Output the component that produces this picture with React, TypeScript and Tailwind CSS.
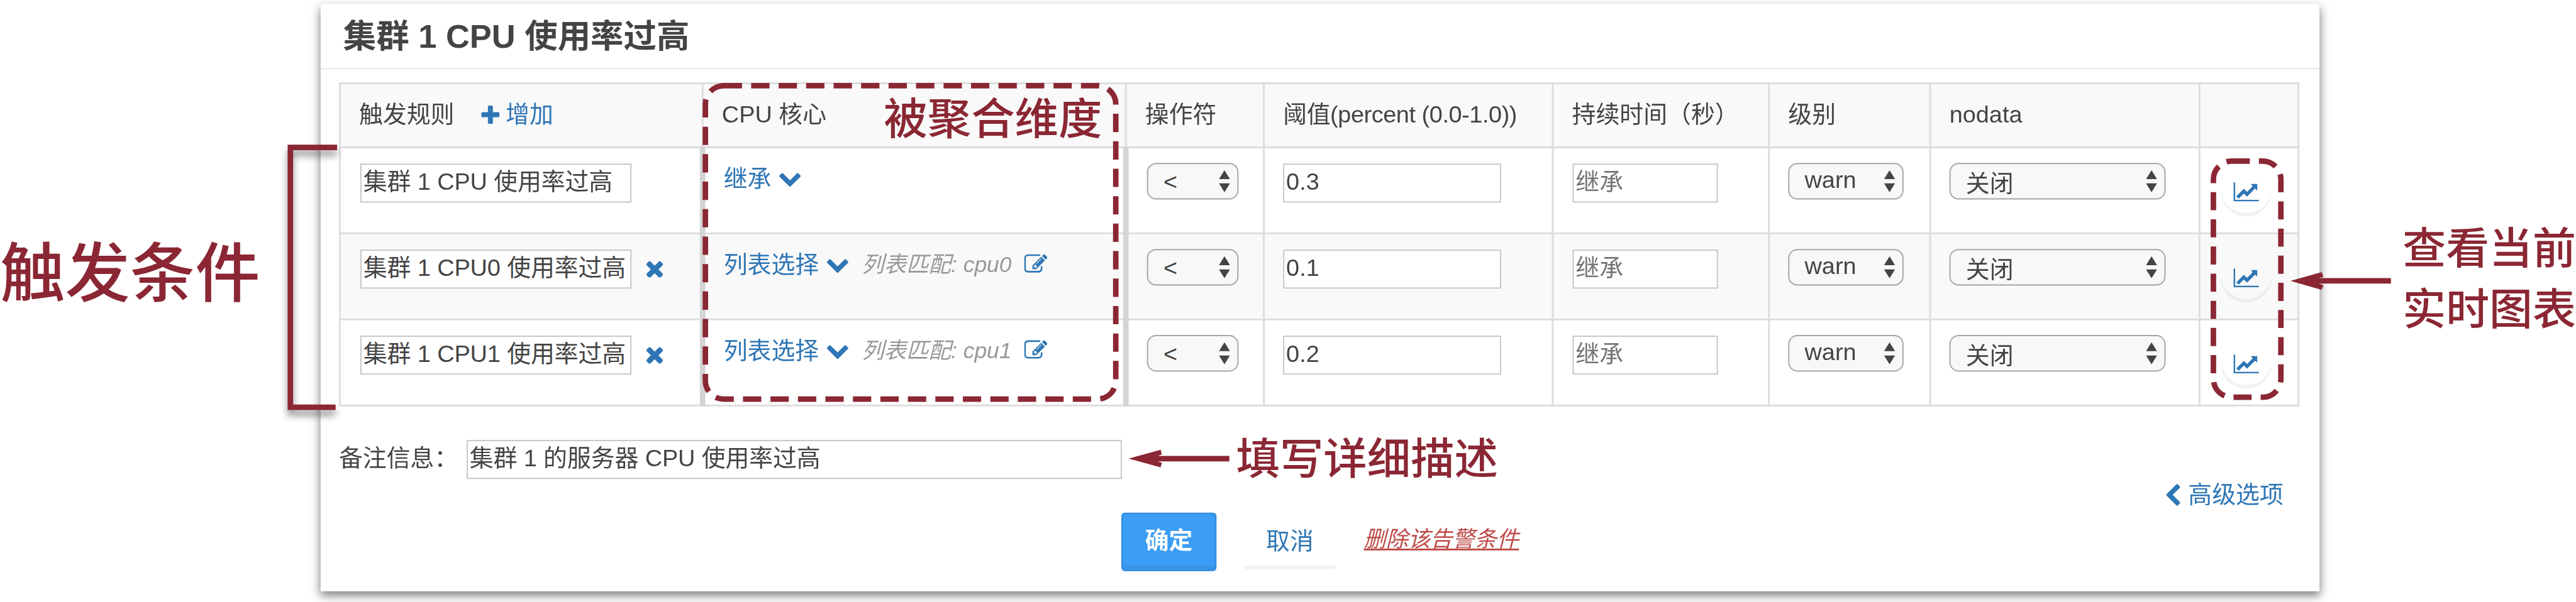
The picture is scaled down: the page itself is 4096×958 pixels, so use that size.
import React from "react";

type IconProps = { d: string; viewBox?: string; className: string };

const Icon = ({ d, viewBox = "0 0 1792 1792", className }: IconProps) => (
  <svg viewBox={viewBox} className={className} fill="currentColor" aria-hidden="true">
    <path d={d} />
  </svg>
);

const PLUS =
  "M1600 736v192q0 40-28 68t-68 28h-416v416q0 40-28 68t-68 28h-192q-40 0-68-28t-28-68v-416h-416q-40 0-68-28t-28-68v-192q0-40 28-68t68-28h416v-416q0-40 28-68t68-28h192q40 0 68 28t28 68v416h416q40 0 68 28t28 68z";
const TIMES =
  "M1490 1322q0 40-28 68l-136 136q-28 28-68 28t-68-28l-294-294-294 294q-28 28-68 28t-68-28l-136-136q-28-28-28-68t28-68l294-294-294-294q-28-28-28-68t28-68l136-136q28-28 68-28t68 28l294 294 294-294q28-28 68-28t68 28l136 136q28 28 28 68t-28 68l-294 294 294 294q28 28 28 68z";
const CHEVRON_DOWN =
  "M1683 808l-742 741q-19 19-45 19t-45-19l-742-741q-19-19-19-45.5t19-45.5l166-165q19-19 45-19t45 19l531 531 531-531q19-19 45-19t45 19l166 165q19 19 19 45.5t-19 45.5z";
const CHEVRON_LEFT =
  "M1427 301l-531 531 531 531q19 19 19 45t-19 45l-166 166q-19 19-45 19t-45-19l-742-742q-19-19-19-45t19-45l742-742q19-19 45-19t45 19l166 166q19 19 19 45t-19 45z";
const EDIT =
  "M888 1184l116-116-152-152-116 116v56h96v96h56zm440-720q-16-16-33 1l-350 350q-17 17-1 33t33-1l350-350q17-17 1-33zm80 594v190q0 119-84.5 203.5t-203.5 84.5h-832q-119 0-203.5-84.5t-84.5-203.5v-832q0-119 84.5-203.5t203.5-84.5h832q63 0 117 25 15 7 18 23 3 17-9 29l-49 49q-14 14-32 8-23-6-45-6h-832q-66 0-113 47t-47 113v832q0 66 47 113t113 47h832q66 0 113-47t47-113v-126q0-13 9-22l64-64q15-15 35-7t20 29zm-96-738l288 288-672 672h-288v-288zm444 132l-92 92-288-288 92-92q28-28 68-28t68 28l152 152q28 28 28 68t-28 68z";
const LINE_CHART =
  "M2048 1536v128h-2048v-1536h128v1408h1920zm-128-1248v435q0 21-19.5 29.5t-35.5-7.5l-121-121-633 633q-10 10-23 10t-23-10l-233-233-416 416-192-192 585-585q10-10 23-10t23 10l233 233 464-464-121-121q-16-16-7.5-35.5t29.5-19.5h435q14 0 22.5 8.5t8.5 22.5z";

type Rule = { name: string; pick: string; match?: string; threshold: string };

const RULES: Rule[] = [
  { name: "集群 1 CPU 使用率过高", pick: "继承", threshold: "0.3" },
  { name: "集群 1 CPU0 使用率过高", pick: "列表选择", match: "列表匹配: cpu0", threshold: "0.1" },
  { name: "集群 1 CPU1 使用率过高", pick: "列表选择", match: "列表匹配: cpu1", threshold: "0.2" },
];

const Field = ({ text, className }: { text: string; className: string }) => (
  <div className={`flex h-[64px] items-center border-2 border-[#c6c6c6] bg-white pl-[3px] pb-[5px] ${className}`}>
    {text}
  </div>
);

const Select = ({ text, className, textClass = "" }: { text: string; className: string; textClass?: string }) => (
  <div
    className={`flex h-[60px] items-center justify-between rounded-[15px] border-[2.5px] border-[#a6a6a6] bg-[#f8f8f8] pr-[12px] pl-[25px] ${className}`}
  >
    <span className={textClass}>{text}</span>
    <svg viewBox="0 0 18 36" className="h-[36px] w-[18px]" fill="#444444" aria-hidden="true">
      <path d="M9 0L18 14.5H0zM9 36L0 21.5H18z" />
    </svg>
  </div>
);

const Head = ({ children }: { children?: React.ReactNode }) => (
  <div className="flex items-center border-r-[3px] border-b-[3px] border-[#dddddd] pl-[30px] pb-[3px]">{children}</div>
);

const Cell = ({ children, className = "" }: { children?: React.ReactNode; className?: string }) => (
  <div className={`flex items-start border-b-[3px] border-[#dddddd] pl-[30px] ${className}`}>{children}</div>
);

const Divider = () => <div className="-mt-[3px] bg-[#d4d4d4]" />;

const RuleRow = ({ rule, index }: { rule: Rule; index: number }) => (
  <div
    className={`grid h-[141px] grid-cols-[588px_9px_684px_9px_223px_473px_354px_264px_441px_162px] ${
      index % 2 === 1 ? "bg-[#f9f9f9]" : "bg-white"
    }`}
  >
    <Cell className="gap-[24px] pt-[25px] pl-[32px]">
      <Field text={rule.name} className="w-[444px] tracking-[-0.1px]" />
      {index > 0 && <Icon d={TIMES} viewBox="302 238 1188 1316" className="mt-[16px] h-[30px] w-[28px] text-[#2e76b5]" />}
    </Cell>
    <Divider />
    <Cell className="pt-[30px] pl-[29px] leading-[39px] text-[#2e76b5]">
      <span>{rule.pick}</span>
      <Icon d={CHEVRON_DOWN} className="mt-[-1px] ml-[11px] h-[39px] w-[39px]" />
      {rule.match && (
        <>
          <span className="ml-[20px] text-[36.5px] text-[#999999] italic">{rule.match}</span>
          <Icon d={EDIT} className="ml-[21px] h-[38px] w-[38px]" />
        </>
      )}
    </Cell>
    <Divider />
    <Cell className="border-r-[3px] pt-[24px]">
      <Select text="<" className="w-[150px]" textClass="text-[39px]" />
    </Cell>
    <Cell className="border-r-[3px] pt-[25px]">
      <Field text={rule.threshold} className="w-[357px]" />
    </Cell>
    <Cell className="border-r-[3px] pt-[25px] pl-[31px]">
      <Field text="继承" className="w-[238px] text-[#757575]" />
    </Cell>
    <Cell className="border-r-[3px] pt-[24px]">
      <Select text="warn" className="w-[189px]" textClass="-mt-[5px]" />
    </Cell>
    <Cell className="border-r-[3px] pt-[24px]">
      <Select text="关闭" className="w-[354px]" textClass="mt-[7px]" />
    </Cell>
    <Cell className="border-r-[3px] pt-[28px] pl-[33px]">
      <div className="flex h-[84px] w-[84px] items-center justify-center rounded-full pt-[2px] shadow-[inset_0_-6px_0_rgba(0,0,0,0.05)]">
        <Icon d={LINE_CHART} viewBox="0 128 2048 1536" className="h-[31px] w-[42px] text-[#2e76b5]" />
      </div>
    </Cell>
  </div>
);

const RED = "#8b2734";

const Annotations = () => (
  <svg viewBox="0 0 4218 987" className="pointer-events-none absolute top-0 left-0 h-[987px] w-[4218px]" aria-hidden="true">
    <g className="[filter:drop-shadow(0_9px_6px_rgba(0,0,0,0.45))]">
      <path d="M552 241.5H475.5V667.5H549.5" fill="none" stroke={RED} strokeWidth="9" />
    </g>
    <g fill="none" stroke={RED} strokeWidth="9" strokeDasharray="30 15">
      <rect x="1155" y="140.5" width="672" height="513.5" rx="30" />
      <rect x="3624.3" y="264" width="110.5" height="387" rx="30" pathLength="953.7" />
    </g>
    <g fill={RED}>
      <path d="M3750.4 460.3L3801.5 446L3804.5 453.5L3797 455.8H3915V464.8H3797L3804.5 467.5L3801.5 475Z" />
      <path d="M1848 751.5L1900.5 737L1902.5 744.5L1896 747H2013V756H1896L1902.5 758.5L1900.5 766Z" />
    </g>
  </svg>
);

export default function App() {
  return (
    <div className="h-[958px] w-[4096px] overflow-hidden bg-white">
      <div className="relative flex h-[987px] w-[4218px] origin-top-left scale-[0.97107] font-['Liberation_Sans','Noto_Sans_CJK_SC',sans-serif] text-[39px] leading-none whitespace-nowrap text-[#444444]">
        <aside className="w-[525px] shrink-0 pt-[397px] text-[106.5px] font-medium text-[#8b2734]">触发条件</aside>

        <main className="mt-[6px] h-[963px] w-[3273px] shrink-0 rounded-t-[6px] bg-white shadow-[0_7px_15px_rgba(0,0,0,0.5)]">
          <header className="flex h-[108px] items-center border-b-[3px] border-[#eeeeee] pl-[37px] text-[54px] font-bold">
            集群 1 CPU 使用率过高
          </header>

          <section className="mt-[21px] ml-[30px] w-[3210px] border-t-[3px] border-l-[3px] border-[#dddddd]">
            <div className="grid h-[105px] grid-cols-[594px_693px_226px_473px_354px_264px_441px_162px] bg-[#f9f9f9]">
              <Head>
                <span>触发规则</span>
                <span className="ml-[44px] flex items-center text-[#2e76b5]">
                  <Icon d={PLUS} viewBox="192 128 1408 1408" className="mr-[10px] h-[30px] w-[30px]" />
                  增加
                </span>
              </Head>
              <Head>
                <span>CPU 核心</span>
                <span className="mt-[17px] ml-[94px] text-[71.5px] font-medium text-[#8b2734]">被聚合维度</span>
              </Head>
              <Head>操作符</Head>
              <Head>
                <span className="tracking-[-0.45px]">阈值(percent (0.0-1.0))</span>
              </Head>
              <Head>持续时间（秒）</Head>
              <Head>级别</Head>
              <Head>nodata</Head>
              <Head />
            </div>
            {RULES.map((rule, i) => (
              <RuleRow key={rule.name} rule={rule} index={i} />
            ))}
          </section>

          <div className="mt-[55px] flex h-[64px] items-center pl-[30px]">
            <span className="w-[209px] pb-[5px]">备注信息：</span>
            <Field text="集群 1 的服务器 CPU 使用率过高" className="w-[1073px] tracking-[-0.1px]" />
            <span className="ml-[187px] text-[71.5px] font-medium text-[#8b2734]">填写详细描述</span>
          </div>

          <div className="flex h-[55px] items-center justify-end pr-[59px] pb-[4px] text-[#2e76b5]">
            <Icon d={CHEVRON_LEFT} viewBox="410 26 1036 1612" className="mr-[13px] h-[36px] w-[23px]" />
            <span>高级选项</span>
          </div>

          <div className="flex h-[96px] pl-[1311px]">
            <div className="flex h-[96px] w-[156px] items-center justify-center rounded-[6px] border-[3px] border-[#3490e2] bg-[#3b9df5] pb-[5px] font-bold text-white shadow-[inset_0_-6px_0_#3994e6]">
              确定
            </div>
            <div className="ml-[45px] flex h-[93px] w-[150px] items-center justify-center rounded-[4px] text-[#2e76b5] shadow-[inset_0_-6px_0_#f2f2f2]">
              取消
            </div>
            <div className="ml-[46px] flex h-[89px] items-center text-[36.3px] text-[#bd4a48] italic">
              <span className="underline decoration-[3px] underline-offset-[3px] [text-decoration-skip-ink:none]">
                删除该告警条件
              </span>
            </div>
          </div>
        </main>

        <aside className="pt-[359px] pl-[136px] text-[71px] leading-[99px] font-medium text-[#8b2734]">
          <div>查看当前</div>
          <div>实时图表</div>
        </aside>

        <Annotations />
      </div>
    </div>
  );
}
